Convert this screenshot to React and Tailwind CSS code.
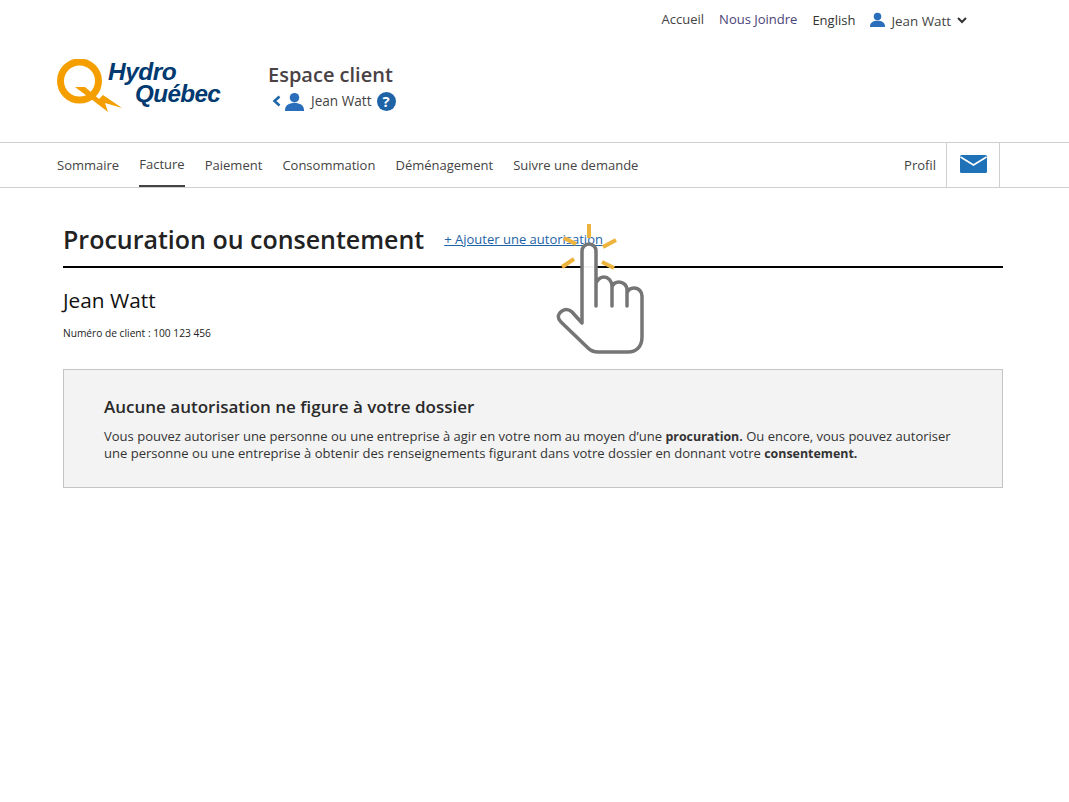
import React from "react";

function Logo() {
  return (
    <div className="relative w-[170px] h-[60px]">
      <svg width="70" height="56" viewBox="0 0 70 56" className="absolute left-0 top-0">
        <circle cx="22.5" cy="22" r="19" fill="none" stroke="#f59e00" strokeWidth="7" />
        <path d="M18 28 L28 28 L42 40 L46 36 L65 49 L48 44 L51 53 L38 43 Z" fill="#f59e00" />
      </svg>
      <div className="absolute left-[51px] top-[3px] font-['Liberation_Sans',sans-serif] italic font-bold text-[#003a70] text-[24.5px] leading-[20px] tracking-[-0.5px]">Hydro</div>
      <div className="absolute left-[78px] top-[24px] font-['Liberation_Sans',sans-serif] italic font-bold text-[#003a70] text-[24.2px] leading-[22px] tracking-[-0.6px]">Québec</div>
    </div>
  );
}

function Person({ size = 16, color = "#2a6ebb" }) {
  return (
    <svg width={size} height={size} viewBox="0 0 20 20" fill={color}>
      <circle cx="10" cy="6" r="5" />
      <path d="M0 19c0-5 4-7.5 10-7.5S20 14 20 19v1H0z" />
    </svg>
  );
}

function Hand() {
  return (
    <svg width="120" height="150" viewBox="0 0 120 150" className="absolute left-[540px] top-[215px]">
      <g fill="none" stroke="#eeb33c" strokeWidth="4">
        <path d="M49 9V23" />
        <path d="M24 23L36 29" />
        <path d="M76 25L63 32" />
        <path d="M22 52L34 44" />
        <path d="M62 47L74 53" />
      </g>
      <path
        d="M42 108V36a7 7 0 0 1 14 0V91V68c2-4 5-6 8-6c4 0 8 4 8 9V91V72c1-3 4-5 7-5c4 0 8 3 8 8V91V78c1-3 4-5 7-5c5 0 8 4 8 8V122c0 10-6 15-14 15H58c-4 0-7-1-10-4L21 107c-5-5-2-9 1-11c3-2 7-2 10 1z"
        fill="#fff"
        fillOpacity="0.95"
        stroke="#757575"
        strokeWidth="3.5"
        strokeLinejoin="round"
      />
    </svg>
  );
}

export default function App() {
  const nav = ["Sommaire", "Facture", "Paiement", "Consommation", "Déménagement", "Suivre une demande"];
  return (
    <div className="relative min-h-[802px] bg-white font-['Open_Sans',sans-serif] text-[#333]">
      <div className="flex justify-end items-center gap-[15px] h-[40px] pr-[102px] text-[13px]">
        <a className="text-[#444]">Accueil</a>
        <a className="text-[#4b3f78]">Nous Joindre</a>
        <a className="text-[#333] pt-[1px]">English</a>
        <div className="flex items-center gap-[6px] text-[#444]">
          <Person size={15} />
          <span className="pt-[3px] text-[13.4px]">Jean Watt</span>
          <svg width="10" height="8" viewBox="0 0 10 8" fill="none" stroke="#333" strokeWidth="2" className="mt-[1px]"><path d="M1 2l4 4 4-4" /></svg>
        </div>
      </div>

      <div className="flex h-[102px] pl-[57px] pt-[19px]">
        <Logo />
        <div className="ml-[41px] pt-[3px]">
          <div className="text-[20px] leading-[26px] font-semibold text-[#4a4245]">Espace client</div>
          <div className="flex items-center mt-[3px] ml-[4px] text-[13.6px] text-[#444]">
            <svg width="9" height="12" viewBox="0 0 9 12" fill="none" stroke="#1e64a8" strokeWidth="2.5"><path d="M7.5 1.5L2.5 6l5 4.5" /></svg>
            <span className="ml-[4px]"><Person size={19} /></span>
            <span className="ml-[7px]">Jean Watt</span>
            <span className="ml-[5px] flex items-center justify-center w-[19px] h-[19px] rounded-full bg-[#1d63a6] text-white text-[15px] font-bold leading-none">?</span>
          </div>
        </div>
      </div>

      <div className="flex items-stretch h-[46px] border-y border-[#cfcfcf] pl-[57px] pr-[69px] text-[13px] text-[#444]">
        <div className="flex gap-[20.1px]">
          {nav.map((n) => (
            <a key={n} className={n === "Facture" ? "flex items-center pt-[2px] border-b-2 border-[#444] h-[44px]" : "flex items-center pt-[2px] h-[44px]"}>{n}</a>
          ))}
        </div>
        <div className="ml-auto flex items-center">
          <span className="mr-[10px] pt-[2px]">Profil</span>
          <div className="w-[54px] h-full flex items-center justify-center border-x border-[#cfcfcf]">
            <svg width="27" height="18" viewBox="0 0 27 18" className="mt-[-3px]">
              <rect width="27" height="18" rx="1.5" fill="#1f72b8" />
              <path d="M0.5 2L13.5 10L26.5 2" fill="none" stroke="#fff" strokeWidth="1.6" />
            </svg>
          </div>
        </div>
      </div>

      <main className="px-[63px] mr-[3px]">
        <div className="flex items-center h-[80px] pt-[25px] border-b-2 border-black">
          <h1 className="text-[25px] font-semibold text-[#222] tracking-[-0.01px]">Procuration ou consentement</h1>
          <a className="ml-[20px] text-[13px] text-[#1d63a6] underline">+ Ajouter une autorisation</a>
        </div>
        <h2 className="mt-[19px] text-[20.8px] leading-[27px] text-[#111]">Jean Watt</h2>
        <p className="mt-[12px] text-[10.2px] leading-[14px] text-[#222]">Numéro de client : 100 123 456</p>
        <section className="mt-[29px] h-[119px] bg-[#f3f3f3] border border-[#c4c4c4] px-[40px] pt-[26px]">
          <h3 className="text-[17px] leading-[22px] font-semibold text-[#2a2a2a]">Aucune autorisation ne figure à votre dossier</h3>
          <p className="mt-[10px] text-[13.04px] leading-[17px] text-[#333]">
            Vous pouvez autoriser une personne ou une entreprise à agir en votre nom au moyen d’une <b className="text-[12.4px]">procuration.</b> Ou encore, vous pouvez autoriser<br />
            une personne ou une entreprise à obtenir des renseignements figurant dans votre dossier en donnant votre <b className="text-[12.4px]">consentement.</b>
          </p>
        </section>
      </main>
      <Hand />
    </div>
  );
}
